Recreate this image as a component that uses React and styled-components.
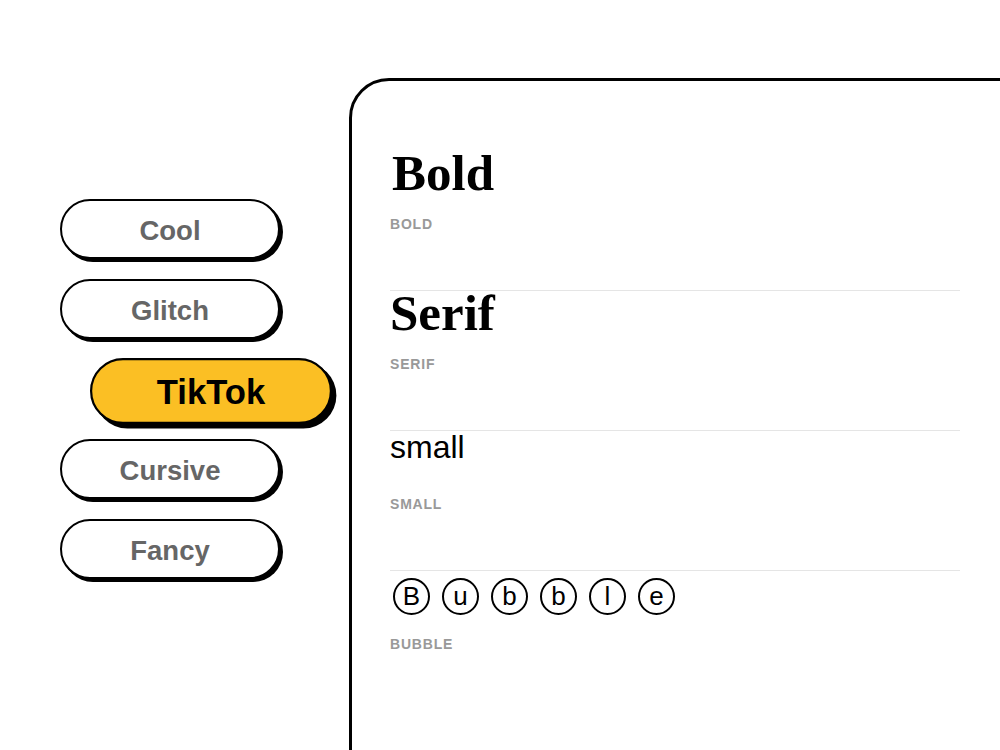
import React from "react";
import styled, { createGlobalStyle, css } from "styled-components";

const Global = createGlobalStyle`
  html, body { margin: 0; padding: 0; background: #fff; }
  body { overflow: hidden; font-family: "Liberation Sans", Arial, sans-serif; }
`;

const Page = styled.div`
  display: flex;
  align-items: flex-start;
  width: 1000px;
  height: 750px;
  padding: 78px 0 0 60px;
  box-sizing: border-box;
  overflow: hidden;
`;

const Nav = styled.nav`
  display: flex;
  flex-direction: column;
  gap: 20px;
  width: 220px;
  margin-top: 121px;
  flex-shrink: 0;
`;

const StyleButton = styled.button`
  width: 220px;
  height: 60px;
  box-sizing: border-box;
  border: 2px solid #000;
  border-radius: 30px;
  background: #fff;
  box-shadow: 3px 3px 0 #000;
  font-family: "Liberation Sans", Arial, sans-serif;
  font-weight: 700;
  font-size: 27.5px;
  color: #666;
  padding: 3px 0 0;
  cursor: pointer;
  ${(p) =>
    p.$active &&
    css`
      background: #fbbf24;
      color: #000;
      font-size: 31.5px;
      box-shadow: 4px 4px 0 #000;
      transform: translate(41px, 2px) scale(1.1);
    `}
`;

const Panel = styled.section`
  flex-shrink: 0;
  margin-left: 69px;
  width: 700px;
  height: 900px;
  box-sizing: border-box;
  border: 3px solid #000;
  border-radius: 40px;
  padding: 70px 0 0 38px;
  background: #fff;
`;

const Row = styled.div`
  width: 570px;
  height: 140px;
  box-sizing: border-box;
  border-bottom: ${(p) => (p.$last ? "none" : "1px solid #e5e5e5")};
  display: flex;
  flex-direction: column;
`;

const Preview = styled.div`
  height: 56px;
  display: flex;
  align-items: flex-start;
  color: #000;
`;

const SerifText = styled.span`
  font-family: "Liberation Serif", "Times New Roman", serif;
  font-weight: 700;
  font-size: 51px;
  line-height: 44px;
  margin-left: ${(p) => p.$indent || 0}px;
`;

const SmallText = styled.span`
  font-family: "Liberation Sans", Arial, sans-serif;
  font-size: 32px;
  line-height: 32px;
`;

const Bubbles = styled.span`
  display: flex;
  gap: 12px;
  margin-top: 7px;
  margin-left: 3px;
`;

const Bubble = styled.span`
  width: 37px;
  height: 37px;
  box-sizing: border-box;
  border: 2px solid #000;
  border-radius: 50%;
  display: flex;
  align-items: center;
  justify-content: center;
  font-family: "Liberation Sans", Arial, sans-serif;
  font-size: 26px;
  line-height: 1;
  padding-bottom: 1px;
`;

const Label = styled.div`
  margin-top: 10px;
  font-family: "Liberation Sans", Arial, sans-serif;
  font-weight: 700;
  font-size: 14px;
  line-height: 14px;
  letter-spacing: 0.8px;
  color: #999;
  text-transform: uppercase;
`;

const buttons = ["Cool", "Glitch", "TikTok", "Cursive", "Fancy"];

export default function App() {
  return (
    <>
      <Global />
      <Page>
        <Nav>
          {buttons.map((b) => (
            <StyleButton key={b} $active={b === "TikTok"}>
              {b}
            </StyleButton>
          ))}
        </Nav>
        <Panel>
          <Row>
            <Preview>
              <SerifText $indent={2}>Bold</SerifText>
            </Preview>
            <Label>Bold</Label>
          </Row>
          <Row>
            <Preview>
              <SerifText>Serif</SerifText>
            </Preview>
            <Label>Serif</Label>
          </Row>
          <Row>
            <Preview>
              <SmallText>small</SmallText>
            </Preview>
            <Label>Small</Label>
          </Row>
          <Row $last>
            <Preview>
              <Bubbles>
                {"Bubble".split("").map((c, i) => (
                  <Bubble key={i}>{c}</Bubble>
                ))}
              </Bubbles>
            </Preview>
            <Label>Bubble</Label>
          </Row>
        </Panel>
      </Page>
    </>
  );
}
